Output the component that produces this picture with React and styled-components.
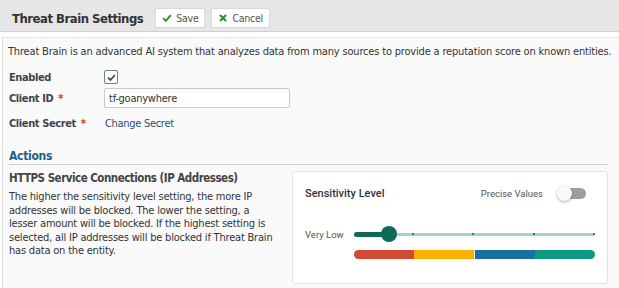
import React from "react";
import styled, { createGlobalStyle } from "styled-components";

const Global = createGlobalStyle`
  html, body { margin: 0; padding: 0; background: #ffffff; }
  body { font-family: "DejaVu Sans Condensed", "DejaVu Sans", sans-serif; color: #333; }
  * { box-sizing: border-box; }
`;

const Page = styled.div`
  width: 619px;
  height: 288px;
  overflow: hidden;
  display: flex;
  flex-direction: column;
`;

const Header = styled.div`
  flex-shrink: 0;
  height: 32px;
  padding-top: 5px;
  background: #e6e6e6;
  border-bottom: 1px solid #d0d0d0;
  display: flex;
  align-items: center;
  padding-left: 12px;
  gap: 6px;
`;

const Title = styled.h1`
  margin: 0 6px 0 0;
  font-size: 13px;
  letter-spacing: -0.5px;
  font-weight: bold;
  color: #333;
`;

const Button = styled.button`
  height: 20px;
  display: flex;
  align-items: center;
  gap: 4px;
  padding: 0 6px 0 6px;
  background: #fff;
  border: 1px solid #d9d9d9;
  border-radius: 2px;
  font-family: inherit;
  font-size: 10.5px;
  letter-spacing: -0.25px;
  color: #555;
`;

const Panel = styled.div`
  flex: 1;
  min-height: 0;
  margin: 5px 0 0 2px;
  border-left: 1px solid #dcdcdc;
  border-top: 1px solid #e4e4e4;
  background: #fafafb;
  padding: 6px 11px 0 5px;
  display: flex;
  flex-direction: column;
`;

const Intro = styled.p`
  margin: 0 0 7px 0;
  font-size: 11px;
  letter-spacing: -0.18px;
  line-height: 16px;
  color: #333;
  white-space: nowrap;
`;

const FormGrid = styled.div`
  display: grid;
  grid-template-columns: 95px 1fr;
  grid-template-rows: 20px 22px 28px;
  align-items: center;
  padding-left: 1px;
`;

const Label = styled.div`
  font-size: 11px;
  letter-spacing: -0.4px;
  font-weight: bold;
  color: #444;
`;

const Req = styled.span`
  color: #d9302c;
  margin-left: 5px;
`;

const Checkbox = styled.div`
  width: 14px;
  height: 14px;
  border: 1px solid #6b7f95;
  border-radius: 2px;
  background: #fff;
  display: flex;
  align-items: center;
  justify-content: center;
`;

const Input = styled.div`
  width: 186px;
  height: 20px;
  border: 1px solid #c9c9c9;
  border-radius: 2px;
  background: #fff;
  font-size: 11px;
  letter-spacing: -0.25px;
  color: #333;
  padding-left: 4px;
  display: flex;
  align-items: center;
`;

const Link = styled.div`
  font-size: 11px;
  letter-spacing: -0.3px;
  color: #2b5164;
  padding-left: 1px;
`;

const SectionTitle = styled.h2`
  margin: 12px 0 0 1px;
  padding-bottom: 1px;
  line-height: 14px;
  font-size: 12px;
  letter-spacing: -0.3px;
  font-weight: bold;
  color: #1d5f86;
  border-bottom: 1px solid #cfd3d6;
`;

const ActionRow = styled.div`
  display: flex;
  justify-content: space-between;
  padding-left: 1px;
  margin-top: 6px;
`;

const ActionText = styled.div`
  width: 275px;
`;

const ActionHeading = styled.div`
  font-size: 11.5px;
  line-height: 14px;
  letter-spacing: -0.5px;
  font-weight: bold;
  color: #444;
  margin-bottom: 5px;
`;

const ActionBody = styled.p`
  margin: 0;
  font-size: 11px;
  letter-spacing: -0.2px;
  line-height: 13.5px;
  color: #333;
  white-space: nowrap;
`;

const Card = styled.div`
  width: 316px;
  height: 113px;
  background: #fff;
  border: 1px solid #e2e2e2;
  border-radius: 3px;
  padding: 14px 12px 0 12px;
  font-family: Roboto, "Noto Sans", sans-serif;
  display: flex;
  flex-direction: column;
`;

const CardTop = styled.div`
  display: flex;
  align-items: center;
  justify-content: space-between;
  height: 15px;
`;

const CardTitle = styled.div`
  font-size: 11px;
  font-weight: 500;
  color: #333;
`;

const PreciseWrap = styled.div`
  display: flex;
  align-items: center;
  gap: 17px;
  padding-right: 9px;
`;

const PreciseLabel = styled.div`
  font-size: 9.5px;
  color: #555;
`;

const Switch = styled.div`
  position: relative;
  width: 26px;
  height: 11px;
  border-radius: 6px;
  background: #9e9e9e;
`;

const Knob = styled.div`
  position: absolute;
  left: -3px;
  top: -2px;
  width: 15px;
  height: 15px;
  border-radius: 50%;
  background: #fafafa;
  box-shadow: 0 1px 3px rgba(0, 0, 0, 0.35);
`;

const SliderRow = styled.div`
  display: flex;
  align-items: center;
  height: 16px;
  margin-top: 25px;
`;

const SliderLabel = styled.div`
  width: 49px;
  font-size: 9.5px;
  color: #555;
`;

const SliderTrack = styled.div`
  position: relative;
  flex: 1;
  height: 3px;
  border-radius: 2px;
  background: #a6d3c6;
`;

const SliderFill = styled.div`
  position: absolute;
  left: 0;
  top: -1px;
  height: 5px;
  border-radius: 2.5px;
  background: #0c6a55;
`;

const Tick = styled.div`
  position: absolute;
  top: 0.5px;
  width: 2px;
  height: 2px;
  border-radius: 1px;
  background: #0c6a55;
`;

const Thumb = styled.div`
  position: absolute;
  top: -6.5px;
  width: 16px;
  height: 16px;
  margin-left: -8px;
  border-radius: 50%;
  background: #0c6a55;
`;

const ColorBar = styled.div`
  display: flex;
  margin: 8px 0 0 49px;
  height: 9px;
  border-radius: 5px;
  overflow: hidden;
`;

const Seg = styled.div`
  flex: 1;
  background: ${p => p.c};
  border-left: ${p => (p.split ? "1px solid #e8eef0" : "none")};
`;

const CheckIcon = ({ color = "#2e8b2e", size = 10 }) => (
  <svg width={size} height={size} viewBox="0 0 10 10">
    <path d="M1.2 5.2 L3.8 7.8 L8.8 2.2" fill="none" stroke={color} strokeWidth="1.9" />
  </svg>
);

const XIcon = () => (
  <svg width="10" height="10" viewBox="0 0 10 10">
    <path d="M2 2 L8 8 M8 2 L2 8" fill="none" stroke="#2e8b2e" strokeWidth="2.1" />
  </svg>
);

export default function App() {
  const ticks = [0.245, 0.495, 0.745, 0.995];
  return (
    <Page>
      <Global />
      <Header>
        <Title>Threat Brain Settings</Title>
        <Button><CheckIcon />Save</Button>
        <Button><XIcon />Cancel</Button>
      </Header>
      <Panel>
        <Intro>
          Threat Brain is an advanced AI system that analyzes data from many sources to provide a reputation score on known entities.
        </Intro>
        <FormGrid>
          <Label>Enabled</Label>
          <div><Checkbox><CheckIcon color="#2b4a66" size={9} /></Checkbox></div>
          <Label>Client ID<Req>*</Req></Label>
          <Input>tf-goanywhere</Input>
          <Label>Client Secret<Req>*</Req></Label>
          <Link>Change Secret</Link>
        </FormGrid>
        <SectionTitle>Actions</SectionTitle>
        <ActionRow>
          <ActionText>
            <ActionHeading>HTTPS Service Connections (IP Addresses)</ActionHeading>
            <ActionBody>
              The higher the sensitivity level setting, the more IP<br />
              addresses will be blocked. The lower the setting, a<br />
              lesser amount will be blocked. If the highest setting is<br />
              selected, all IP addresses will be blocked if Threat Brain<br />
              has data on the entity.
            </ActionBody>
          </ActionText>
          <Card>
            <CardTop>
              <CardTitle>Sensitivity Level</CardTitle>
              <PreciseWrap>
                <PreciseLabel>Precise Values</PreciseLabel>
                <Switch><Knob /></Switch>
              </PreciseWrap>
            </CardTop>
            <SliderRow>
              <SliderLabel>Very Low</SliderLabel>
              <SliderTrack>
                <SliderFill style={{ width: "14.5%" }} />
                {ticks.map(t => (
                  <Tick key={t} style={{ left: `calc(${t * 100}% - 1px)` }} />
                ))}
                <Thumb style={{ left: "14.5%" }} />
              </SliderTrack>
            </SliderRow>
            <ColorBar>
              <Seg c="#d24a34" />
              <Seg c="#fdb000" />
              <Seg c="#17709e" split />
              <Seg c="#0b9a80" />
            </ColorBar>
          </Card>
        </ActionRow>
      </Panel>
    </Page>
  );
}
